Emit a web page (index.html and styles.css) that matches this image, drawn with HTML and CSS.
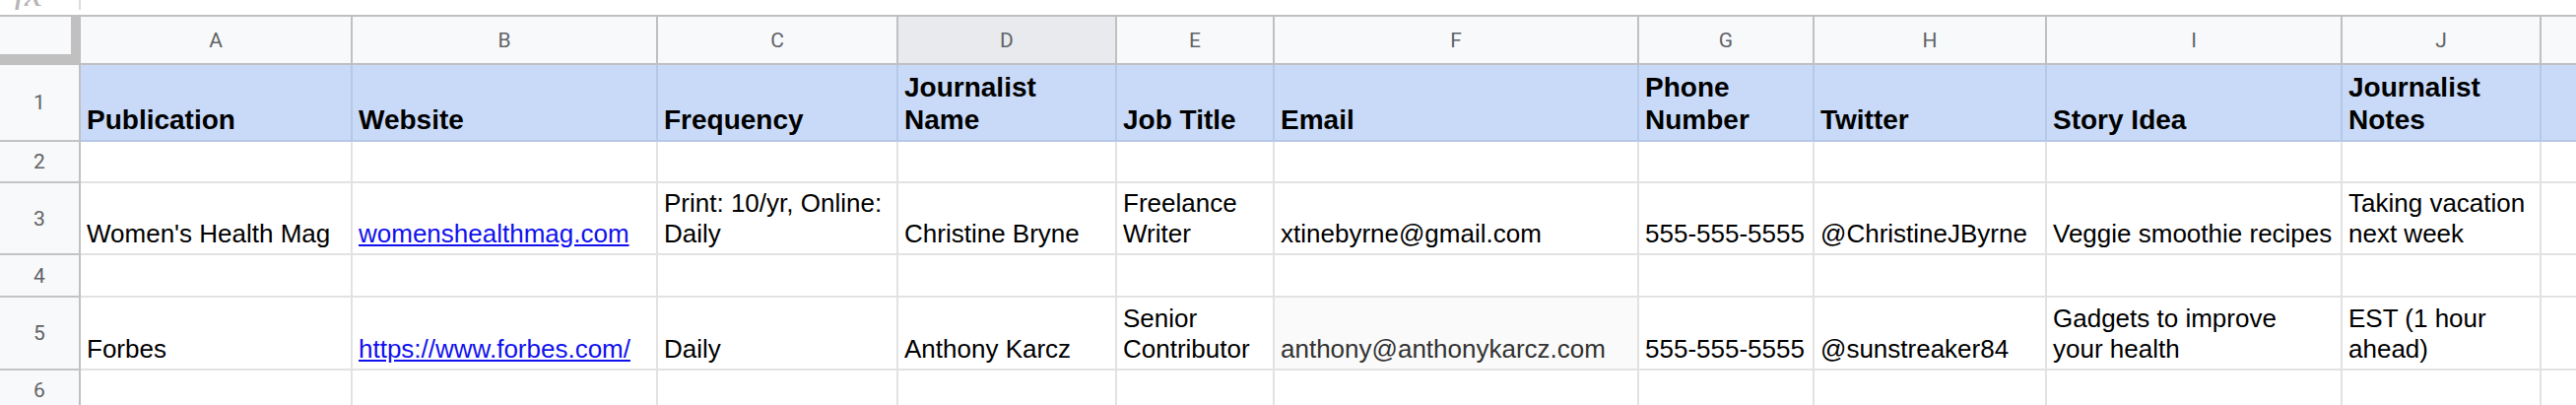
FILE: index.html
```html
<!DOCTYPE html>
<html lang="en">
<head>
<meta charset="utf-8">
<title>Media list</title>
<link rel="stylesheet" href="styles.css">
</head>
<body>
<div class="formula-bar">
  <div class="fx-box"><span class="fx">fx</span></div>
</div>
<div class="sheet">
  <div class="corner"><div class="corner-inner"></div></div>
  <div class="ch">A</div>
  <div class="ch">B</div>
  <div class="ch">C</div>
  <div class="ch ch-sel">D</div>
  <div class="ch">E</div>
  <div class="ch">F</div>
  <div class="ch">G</div>
  <div class="ch">H</div>
  <div class="ch">I</div>
  <div class="ch">J</div>
  <div class="ch"></div>

  <div class="rh">1</div>
  <div class="c h">Publication</div>
  <div class="c h">Website</div>
  <div class="c h">Frequency</div>
  <div class="c h">Journalist<br>Name</div>
  <div class="c h">Job Title</div>
  <div class="c h">Email</div>
  <div class="c h">Phone<br>Number</div>
  <div class="c h">Twitter</div>
  <div class="c h">Story Idea</div>
  <div class="c h">Journalist<br>Notes</div>
  <div class="c h"></div>

  <div class="rh">2</div>
  <div class="c"></div><div class="c"></div><div class="c"></div><div class="c"></div><div class="c"></div><div class="c"></div><div class="c"></div><div class="c"></div><div class="c"></div><div class="c"></div><div class="c"></div>

  <div class="rh">3</div>
  <div class="c">Women's Health Mag</div>
  <div class="c"><a class="link" href="#">womenshealthmag.com</a></div>
  <div class="c">Print: 10/yr, Online:<br>Daily</div>
  <div class="c">Christine Bryne</div>
  <div class="c">Freelance<br>Writer</div>
  <div class="c">xtinebyrne@gmail.com</div>
  <div class="c">555-555-5555</div>
  <div class="c">@ChristineJByrne</div>
  <div class="c">Veggie smoothie recipes</div>
  <div class="c">Taking vacation<br>next week</div>
  <div class="c"></div>

  <div class="rh">4</div>
  <div class="c"></div><div class="c"></div><div class="c"></div><div class="c"></div><div class="c"></div><div class="c"></div><div class="c"></div><div class="c"></div><div class="c"></div><div class="c"></div><div class="c"></div>

  <div class="rh">5</div>
  <div class="c">Forbes</div>
  <div class="c"><a class="link" href="#">https://www.forbes.com/</a></div>
  <div class="c">Daily</div>
  <div class="c">Anthony Karcz</div>
  <div class="c">Senior<br>Contributor</div>
  <div class="c c-hover">anthony@anthonykarcz.com</div>
  <div class="c">555-555-5555</div>
  <div class="c">@sunstreaker84</div>
  <div class="c">Gadgets to improve<br>your health</div>
  <div class="c">EST (1 hour<br>ahead)</div>
  <div class="c"></div>

  <div class="rh">6</div>
  <div class="c"></div><div class="c"></div><div class="c"></div><div class="c"></div><div class="c"></div><div class="c"></div><div class="c"></div><div class="c"></div><div class="c"></div><div class="c"></div><div class="c"></div>
</div>
</body>
</html>
```
FILE: styles.css
```css
* { box-sizing: border-box; }

html, body {
  margin: 0;
  padding: 0;
  background: #ffffff;
  overflow: hidden;
}

body {
  width: 2615px;
  height: 411px;
  font-family: "Liberation Sans", Arial, sans-serif;
  color: #000000;
}

.formula-bar {
  height: 17px;
  border-bottom: 2px solid #c0c0c0;
  display: flex;
  align-items: flex-start;
}

.fx-box {
  width: 82px;
  height: 10px;
  border-right: 2px solid #dadce0;
  overflow: hidden;
  padding-left: 14px;
}

.fx {
  display: block;
  font-family: "Liberation Serif", "Times New Roman", serif;
  font-style: italic;
  font-size: 40px;
  line-height: 40px;
  margin-top: -27px;
  color: #b5b5b5;
}

.sheet {
  display: grid;
  grid-template-columns: 82px 276px 310px 244px 222px 160px 370px 178px 236px 300px 202px 80px;
  grid-template-rows: 49px 78px 42px 73px 43px 74px 42px;
}

.corner {
  background: #c0c0c0;
  padding: 0 10px 11px 0;
}

.corner-inner {
  width: 100%;
  height: 100%;
  background: #f8f9fa;
}

.ch {
  background: #f8f9fa;
  border-right: 2px solid #c0c0c0;
  border-bottom: 2px solid #c0c0c0;
  display: flex;
  align-items: center;
  justify-content: center;
  font-family: Roboto, "Liberation Sans", sans-serif;
  font-size: 21px;
  color: #5f6368;
  padding-top: 1px;
}

.ch-sel {
  background: #e8eaed;
}

.rh {
  background: #f8f9fa;
  border-right: 2px solid #c0c0c0;
  border-bottom: 2px solid #c4c4c4;
  display: flex;
  align-items: center;
  justify-content: center;
  font-family: Roboto, "Liberation Sans", sans-serif;
  font-size: 21px;
  color: #5f6368;
}

.c {
  border-right: 2px solid #e2e2e2;
  border-bottom: 2px solid #e2e2e2;
  display: flex;
  align-items: flex-end;
  padding: 0 4px 4px 6px;
  font-size: 26px;
  line-height: 31px;
  white-space: nowrap;
  overflow: hidden;
}

.h {
  background: #c9daf8;
  border-right-color: #b6c8e8;
  border-bottom-color: #b6c8e8;
  font-weight: bold;
  font-size: 28px;
  line-height: 33px;
  padding-bottom: 4px;
}

.c-hover {
  background: #fafafa;
  color: #333333;
}

.link {
  color: #1111ee;
  text-decoration: underline;
}
```
